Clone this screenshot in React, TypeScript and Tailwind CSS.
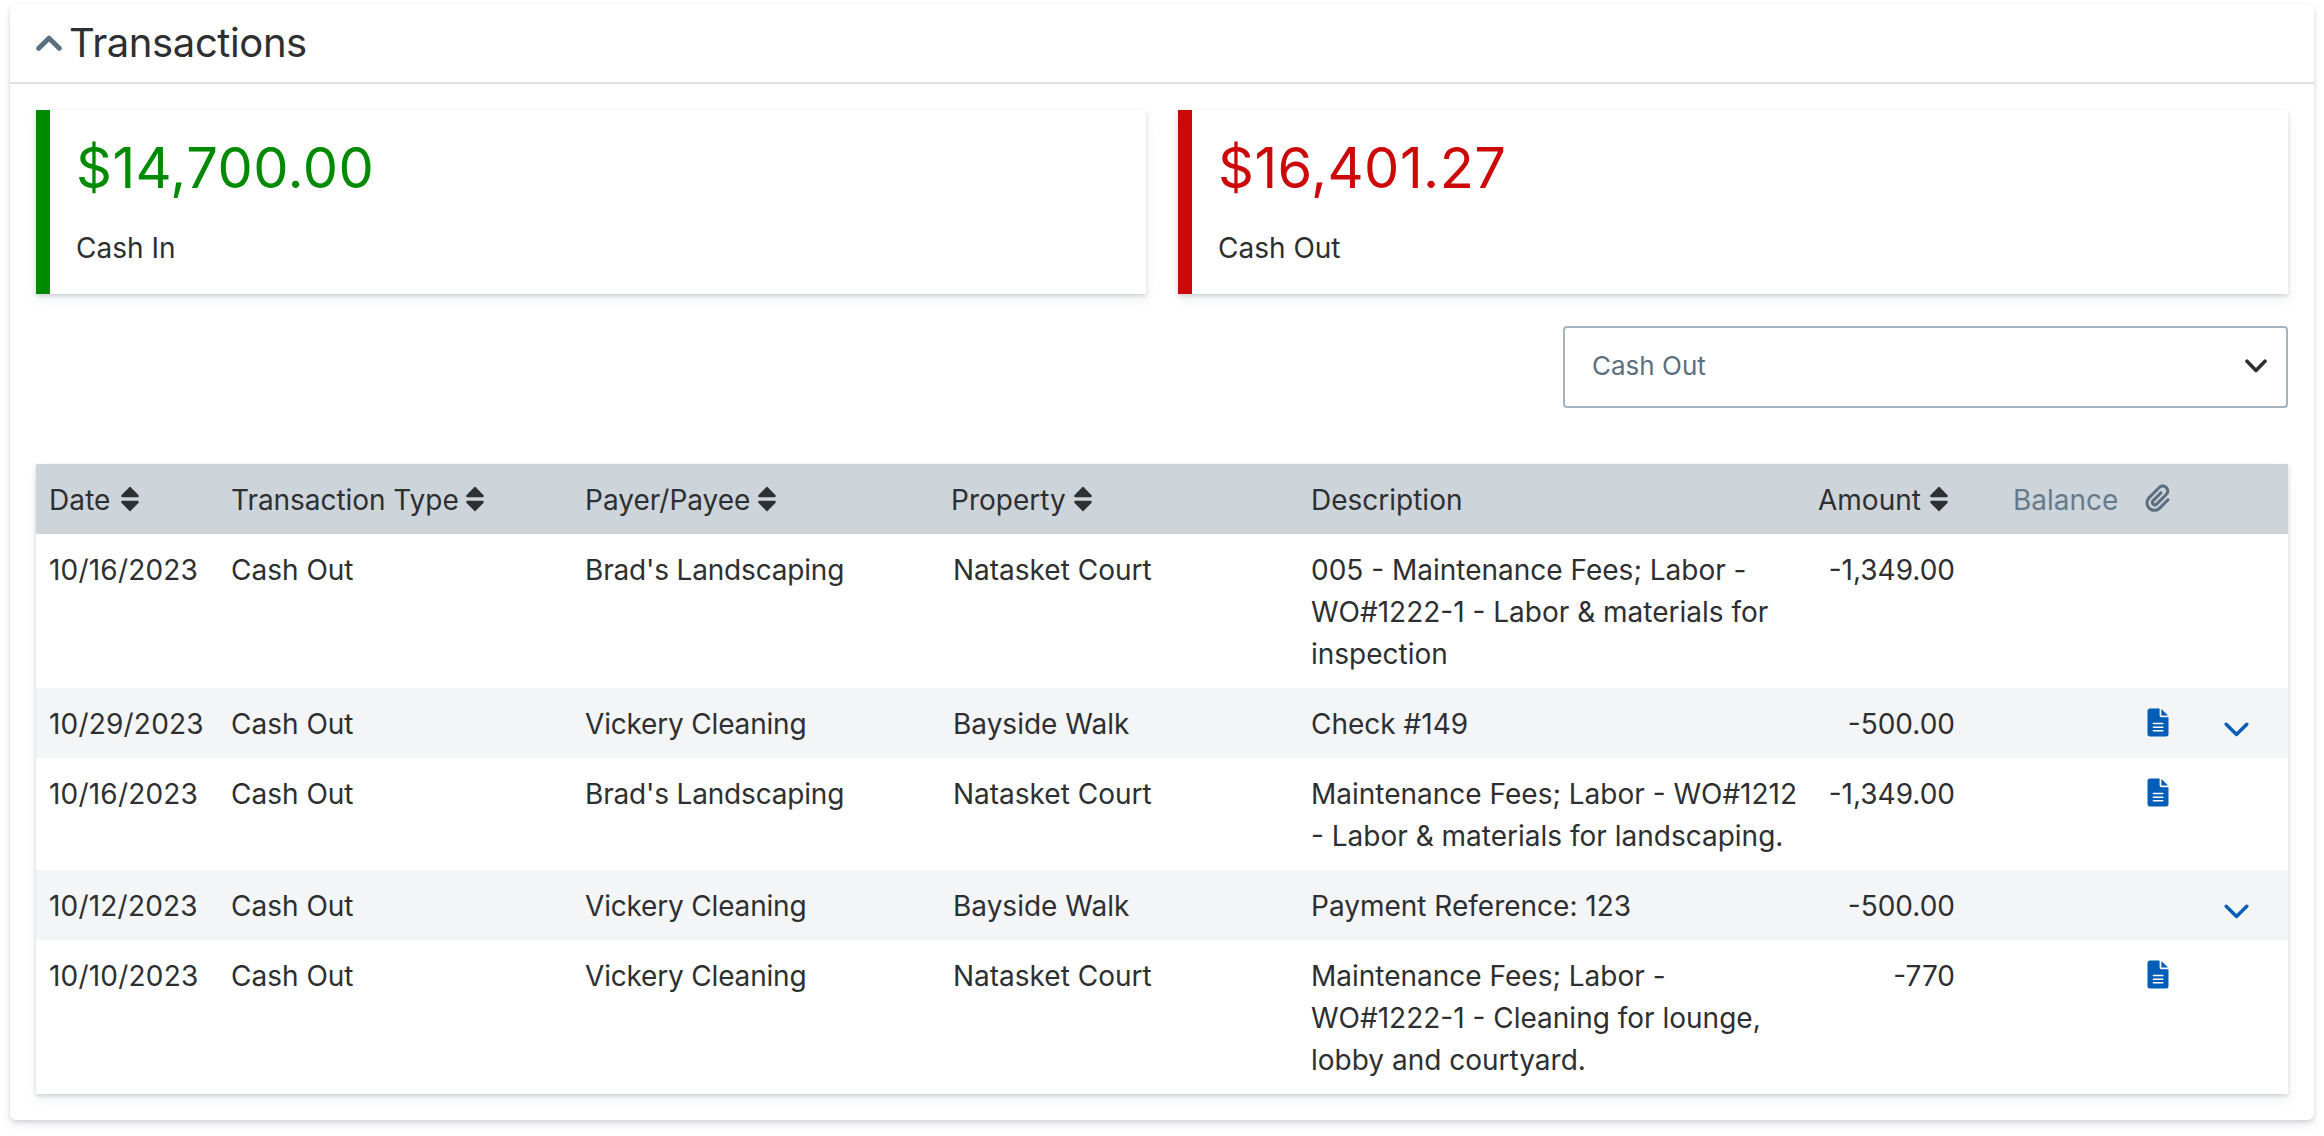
import React from "react";
import { FaPaperclip } from "react-icons/fa6";

const rows = [
  { date: "10/16/2023", payee: "Brad's Landscaping", property: "Natasket Court", lines: ["005 - Maintenance Fees; Labor -", "WO#1222-1 - Labor & materials for", "inspection"], amount: "-1,349.00", file: false, expand: false },
  { date: "10/29/2023", payee: "Vickery Cleaning", property: "Bayside Walk", lines: ["Check #149"], amount: "-500.00", file: true, expand: true },
  { date: "10/16/2023", payee: "Brad's Landscaping", property: "Natasket Court", lines: ["Maintenance Fees; Labor - WO#1212", "- Labor & materials for landscaping."], amount: "-1,349.00", file: true, expand: false },
  { date: "10/12/2023", payee: "Vickery Cleaning", property: "Bayside Walk", lines: ["Payment Reference: 123"], amount: "-500.00", file: false, expand: true },
  { date: "10/10/2023", payee: "Vickery Cleaning", property: "Natasket Court", lines: ["Maintenance Fees; Labor -", "WO#1222-1 - Cleaning for lounge,", "lobby and courtyard."], amount: "-770", file: true, expand: false },
];

const COLS = "grid-cols-[182px_354px_368px_358px_506px_138px_186px_83px_76px]";
const SHADOW = "shadow-[0_2px_4px_rgba(60,80,95,0.20),0_6px_12px_rgba(60,80,95,0.08)]";

function Sort({ gap = "ml-[8px]" }: { gap?: string }) {
  return (
    <svg className={"mt-[7px] h-[26px] w-[18px] shrink-0 " + gap} viewBox="0 0 18 26" fill="currentColor">
      <path d="M9 0.5 17.6 9.3Q18.2 11.2 16.5 11.2H1.5Q-0.2 11.2 0.4 9.3Z" />
      <path d="M9 25.5 17.6 16.7Q18.2 14.8 16.5 14.8H1.5Q-0.2 14.8 0.4 16.7Z" />
    </svg>
  );
}

function Chevron({ className, width, d, viewBox }: { className: string; width: number; d: string; viewBox: string }) {
  return (
    <svg className={className} viewBox={viewBox} fill="none" stroke="currentColor" strokeWidth={width} strokeLinecap="round" strokeLinejoin="round">
      <path d={d} />
    </svg>
  );
}

function FileIcon() {
  return (
    <svg className="mt-[5px] ml-[6px] h-[29px] w-[22px]" viewBox="0 0 22 29">
      <path fill="#005eb8" d="M3 0.5H12.6V7.5Q12.6 9.2 14.3 9.2H21.5V26Q21.5 28.5 19 28.5H3Q0.5 28.5 0.5 26V3Q0.5 0.5 3 0.5Z" />
      <path fill="#005eb8" d="M14.4 1 21 7.6H14.4Z" />
      <path stroke="#fff" strokeWidth="1.5" strokeLinecap="round" d="M6.4 15.6H15.8M6.4 19.2H15.8M6.4 22.8H15.8" />
    </svg>
  );
}

function Stat({ tone, amount, label }: { tone: string; amount: string; label: string }) {
  return (
    <div className={"h-[184px] flex-1 border-l-[14px] bg-white pl-[26px] " + SHADOW + " " + tone}>
      <div className="pt-[16px] text-[56px] leading-[84px] tracking-[0.45px]">{amount}</div>
      <div className="mt-[17px] text-[28px] leading-[42px] text-[#2d2f31]">{label}</div>
    </div>
  );
}

export default function App() {
  return (
    <div className="h-[1136px] w-[2324px] overflow-hidden bg-white px-[10px] pt-[4px] font-['Inter',sans-serif] text-[28px] leading-[42px] text-[#2d2f31]">
      <section className={"h-[1116px] rounded-[6px] bg-white " + SHADOW}>
        <header className="flex h-[80px] items-center border-b-2 border-[#dce1e6] px-[26px]">
          <Chevron className="h-[16px] w-[26px] text-[#5b6f7f]" width={5} viewBox="0 0 26 16" d="M2.7 13.2 13 3.2 23.3 13.2" />
          <h1 className="ml-[7px] text-[40px] leading-[60px] tracking-[-0.4px]">Transactions</h1>
        </header>
        <div className="px-[26px]">
          <div className="flex gap-[32px] pt-[26px]">
            <Stat tone="border-[#008a00] text-[#008a00]" amount="$14,700.00" label="Cash In" />
            <Stat tone="border-[#cc0808] text-[#cc0808]" amount="$16,401.27" label="Cash Out" />
          </div>
          <div className="mt-[32px] flex justify-end">
            <div className="flex h-[82px] w-[725px] items-center justify-between rounded-[4px] border-2 border-[#a5b4c0] pr-[19px] pl-[27px] text-[#5b6f7f]">
              <span className="-mt-[2px] text-[26px]">Cash Out</span>
              <Chevron className="-mt-[2px] h-[14px] w-[22px] text-[#2d2f31]" width={3.6} viewBox="0 0 22 14" d="M2 2.2 11 11.5 20 2.2" />
            </div>
          </div>
          <div className={"mt-[56px] bg-white " + SHADOW}>
            <div className={"grid h-[70px] bg-[#cdd4da] pt-[15px] pl-[13px] " + COLS}>
              <div className="flex tracking-[0.1px]">Date<Sort gap="ml-[10px]" /></div>
              <div className="flex tracking-[-0.05px]">Transaction Type<Sort gap="ml-[7px]" /></div>
              <div className="flex">Payer/Payee<Sort /></div>
              <div className="-ml-[2px] flex">Property<Sort /></div>
              <div>Description</div>
              <div className="ml-px flex">Amount<Sort gap="ml-[9px]" /></div>
              <div className="pl-[58px] text-[#657b8c]">Balance</div>
              <div><FaPaperclip className="mt-[5px] ml-[4px] h-[28px] w-[25px] text-[#5b6f7f]" /></div>
            </div>
            {rows.map((r, i) => (
              <div key={i} className={"grid pt-[15px] pb-[13px] pl-[13px] " + COLS + (i % 2 ? " bg-[#f4f5f7]" : " bg-white")}>
                <div className="tracking-[0.2px]">{r.date}</div>
                <div>Cash Out</div>
                <div className="tracking-[-0.18px]">{r.payee}</div>
                <div>{r.property}</div>
                <div className="whitespace-nowrap">{r.lines.map((l) => <div key={l}>{l}</div>)}</div>
                <div className="text-right">{r.amount}</div>
                <div />
                <div>{r.file && <FileIcon />}</div>
                <div>{r.expand && <Chevron className="mt-[19px] h-[15px] w-[25px] text-[#005eb8]" width={3.4} viewBox="0 0 25 15" d="M2.2 2.2 12.5 12.5 22.8 2.2" />}</div>
              </div>
            ))}
          </div>
        </div>
      </section>
    </div>
  );
}
